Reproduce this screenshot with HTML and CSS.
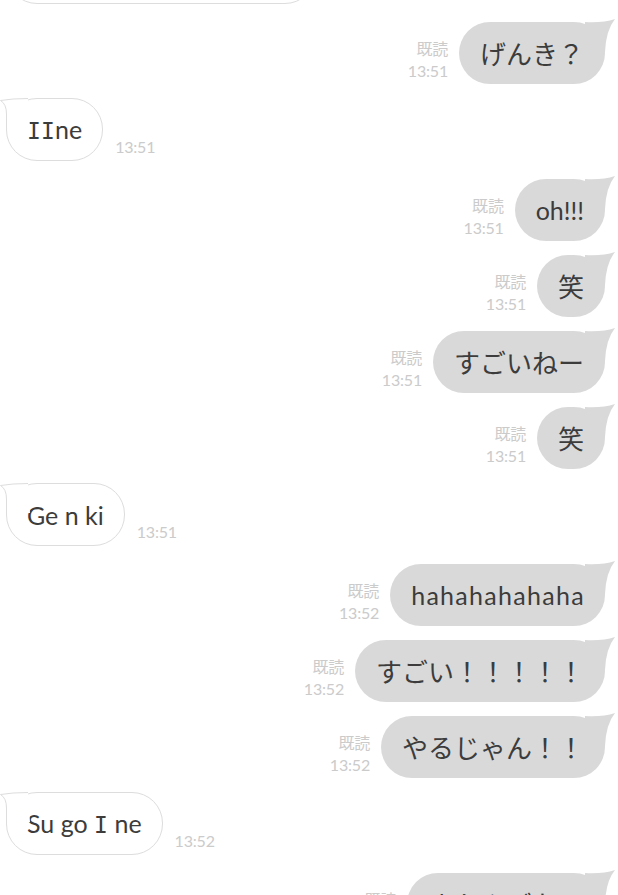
FILE: index.html
```html
<!DOCTYPE html>
<html lang="ja">
<head>
<meta charset="utf-8">
<link rel="stylesheet" href="styles.css">
</head>
<body>
<div class="chat">
  <div class="row in">
    <div class="bubble bubble-in wide"><span class="txt"> </span><svg class="tail-in" viewBox="0 0 30 34" width="30" height="34"><path class="tf" d="M28,4.5 Q12,4.5 0.5,6.5 Q6.5,10 6.5,20 L6.5,34 L30,34 Z"/><path class="ts" d="M28,4.5 Q12,4.5 0.5,6.5 Q6.5,10 6.5,20 L6.5,34"/></svg></div>
    <div class="time">13:51</div>
  </div>

  <div class="row out">
    <div class="meta">既読<br>13:51</div>
    <div class="bubble bubble-out"><span class="txt ja">げんき？</span><svg class="tail-out" viewBox="0 0 31 34" width="31" height="34"><path d="M0,4 Q18,5 30,1 Q21,12 20,34 L0,34 Z"/></svg></div>
  </div>

  <div class="row in">
    <div class="bubble bubble-in"><span class="txt"><span class="serif-i">I</span><span class="serif-i">I</span>ne</span><svg class="tail-in" viewBox="0 0 30 34" width="30" height="34"><path class="tf" d="M28,4.5 Q12,4.5 0.5,6.5 Q6.5,10 6.5,20 L6.5,34 L30,34 Z"/><path class="ts" d="M28,4.5 Q12,4.5 0.5,6.5 Q6.5,10 6.5,20 L6.5,34"/></svg></div>
    <div class="time">13:51</div>
  </div>

  <div class="row out">
    <div class="meta">既読<br>13:51</div>
    <div class="bubble bubble-out"><span class="txt">oh!!!</span><svg class="tail-out" viewBox="0 0 31 34" width="31" height="34"><path d="M0,4 Q18,5 30,1 Q21,12 20,34 L0,34 Z"/></svg></div>
  </div>

  <div class="row out">
    <div class="meta">既読<br>13:51</div>
    <div class="bubble bubble-out"><span class="txt ja">笑</span><svg class="tail-out" viewBox="0 0 31 34" width="31" height="34"><path d="M0,4 Q18,5 30,1 Q21,12 20,34 L0,34 Z"/></svg></div>
  </div>

  <div class="row out">
    <div class="meta">既読<br>13:51</div>
    <div class="bubble bubble-out"><span class="txt ja">すごいねー</span><svg class="tail-out" viewBox="0 0 31 34" width="31" height="34"><path d="M0,4 Q18,5 30,1 Q21,12 20,34 L0,34 Z"/></svg></div>
  </div>

  <div class="row out">
    <div class="meta">既読<br>13:51</div>
    <div class="bubble bubble-out"><span class="txt ja">笑</span><svg class="tail-out" viewBox="0 0 31 34" width="31" height="34"><path d="M0,4 Q18,5 30,1 Q21,12 20,34 L0,34 Z"/></svg></div>
  </div>

  <div class="row in">
    <div class="bubble bubble-in"><span class="txt">Ge n ki</span><svg class="tail-in" viewBox="0 0 30 34" width="30" height="34"><path class="tf" d="M28,4.5 Q12,4.5 0.5,6.5 Q6.5,10 6.5,20 L6.5,34 L30,34 Z"/><path class="ts" d="M28,4.5 Q12,4.5 0.5,6.5 Q6.5,10 6.5,20 L6.5,34"/></svg></div>
    <div class="time">13:51</div>
  </div>

  <div class="row out">
    <div class="meta">既読<br>13:52</div>
    <div class="bubble bubble-out"><span class="txt spaced">hahahahahaha</span><svg class="tail-out" viewBox="0 0 31 34" width="31" height="34"><path d="M0,4 Q18,5 30,1 Q21,12 20,34 L0,34 Z"/></svg></div>
  </div>

  <div class="row out">
    <div class="meta">既読<br>13:52</div>
    <div class="bubble bubble-out"><span class="txt ja">すごい！！！！！</span><svg class="tail-out" viewBox="0 0 31 34" width="31" height="34"><path d="M0,4 Q18,5 30,1 Q21,12 20,34 L0,34 Z"/></svg></div>
  </div>

  <div class="row out">
    <div class="meta">既読<br>13:52</div>
    <div class="bubble bubble-out"><span class="txt ja">やるじゃん！！</span><svg class="tail-out" viewBox="0 0 31 34" width="31" height="34"><path d="M0,4 Q18,5 30,1 Q21,12 20,34 L0,34 Z"/></svg></div>
  </div>

  <div class="row in">
    <div class="bubble bubble-in"><span class="txt">Su go <span class="serif-i">I</span> ne</span><svg class="tail-in" viewBox="0 0 30 34" width="30" height="34"><path class="tf" d="M28,4.5 Q12,4.5 0.5,6.5 Q6.5,10 6.5,20 L6.5,34 L30,34 Z"/><path class="ts" d="M28,4.5 Q12,4.5 0.5,6.5 Q6.5,10 6.5,20 L6.5,34"/></svg></div>
    <div class="time">13:52</div>
  </div>

  <div class="row out">
    <div class="meta">既読<br>13:52</div>
    <div class="bubble bubble-out"><span class="txt ja">またんごな！</span><svg class="tail-out" viewBox="0 0 31 34" width="31" height="34"><path d="M0,4 Q18,5 30,1 Q21,12 20,34 L0,34 Z"/></svg></div>
  </div>
</div>
</body>
</html>
```

FILE: styles.css
```css
html, body {
  margin: 0;
  padding: 0;
  background: #ffffff;
}
body {
  width: 618px;
  height: 895px;
  overflow: hidden;
  font-family: Lato, "Noto Sans CJK JP", sans-serif;
}
.chat {
  display: flex;
  flex-direction: column;
  margin-top: -59px;
  padding: 0 13px 0 6px;
}
.row {
  display: flex;
  align-items: flex-end;
}
.row.out {
  justify-content: flex-end;
  margin-bottom: 14px;
}
.row.in {
  justify-content: flex-start;
  margin-bottom: 18px;
}
.bubble {
  position: relative;
  box-sizing: border-box;
  height: 62px;
  border-radius: 31px;
  padding: 0 21px;
  display: flex;
  align-items: center;
}
.txt {
  white-space: pre;
  font-size: 25px;
  line-height: 30px;
  color: #3c3c3c;
  font-family: Lato, "Noto Sans CJK JP", sans-serif;
}
.txt.ja {
  font-size: 26px;
  font-family: "Noto Sans CJK JP", sans-serif;
}
.txt.spaced {
  letter-spacing: 1.3px;
  margin-right: -1px;
}
.bubble-out {
  background: #d9d9d9;
}
.bubble-in {
  height: 63px;
  background: #ffffff;
  border: 1px solid #dddddd;
  padding: 0 20px;
}
.bubble-in.wide {
  width: 310px;
}
.serif-i {
  display: inline-block;
  width: 14px;
  text-align: center;
  font-family: "DejaVu Sans Mono", monospace;
  font-size: 23px;
}
.tail-out {
  position: absolute;
  top: -4px;
  right: -11px;
  fill: #d9d9d9;
}
.tail-in {
  position: absolute;
  top: -5px;
  left: -7px;
}
.tail-in .tf {
  fill: #ffffff;
}
.tail-in .ts {
  fill: none;
  stroke: #dddddd;
  stroke-width: 1;
}
.meta {
  font-size: 16px;
  line-height: 22px;
  color: #cbcbcb;
  text-align: right;
  margin-right: 11px;
  margin-bottom: 2px;
  font-family: Lato, "Noto Sans CJK JP", sans-serif;
  letter-spacing: -0.2px;
}
.time {
  font-size: 16px;
  line-height: 22px;
  color: #cbcbcb;
  margin-left: 12px;
  margin-bottom: 3px;
  letter-spacing: -0.2px;
  font-family: Lato, sans-serif;
}
```
